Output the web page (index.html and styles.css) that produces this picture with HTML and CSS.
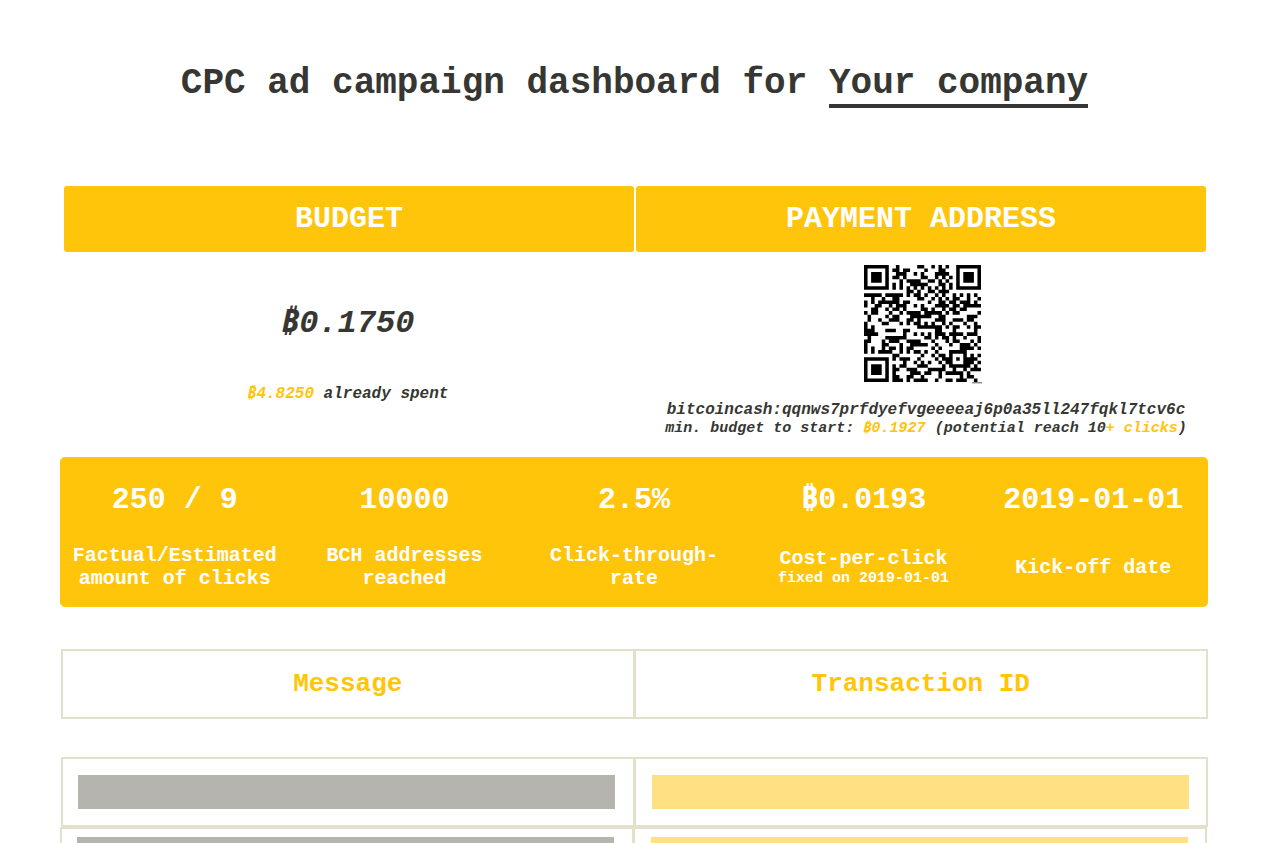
FILE: index.html
```
<!DOCTYPE html>
<html lang="en">
<head>
    <meta charset="UTF-8">
    <meta name="viewport" content="width=device-width, initial-scale=1.0">
    <title>CPC ad campaign dashboard</title>
    <link rel="stylesheet" href="styles.css">
</head>
<body>
    <h1>CPC ad campaign dashboard for <span class="company">Your company</span></h1>

    <table class="summary">
        <thead>
            <tr>
                <th>BUDGET</th>
                <th>PAYMENT ADDRESS</th>
            </tr>
        </thead>
        <tbody>
            <tr>
                <td class="budget">
                    <p class="amount"><span class="coin">₿</span>0.1750</p>
                    <p class="spent"><span class="accent"><span class="coin">₿</span>4.8250</span> already spent</p>
                </td>
                <td class="payment">
                    <svg id="qr" class="qr" viewBox="0 0 33 33" role="img" aria-label="Payment QR code"></svg>
                    <p class="address" id="address">bitcoincash:qqnws7prfdyefvgeeeeaj6p0a35ll247fqkl7tcv6c</p>
                    <p class="minimum">min. budget to start: <span class="accent"><span class="coin">₿</span>0.1927</span> (potential reach 10<span class="accent">+ clicks</span>)</p>
                </td>
            </tr>
        </tbody>
    </table>

    <div class="stats">
        <div class="stat">
            <div class="value">250 / 9</div>
            <div class="label">Factual/Estimated amount of clicks</div>
        </div>
        <div class="stat">
            <div class="value">10000</div>
            <div class="label">BCH addresses reached</div>
        </div>
        <div class="stat">
            <div class="value">2.5%</div>
            <div class="label">Click-through-rate</div>
        </div>
        <div class="stat">
            <div class="value"><span class="coin">₿</span>0.0193</div>
            <div class="label">Cost-per-click <small>fixed on 2019-01-01</small></div>
        </div>
        <div class="stat">
            <div class="value">2019-01-01</div>
            <div class="label">Kick-off date</div>
        </div>
    </div>

    <table class="list list-head">
        <tr>
            <th>Message</th>
            <th>Transaction ID</th>
        </tr>
    </table>

    <table class="list">
        <tr>
            <td><div class="bar message"></div></td>
            <td><div class="bar transaction"></div></td>
        </tr>
    </table>
    <table class="list list-more">
        <tr>
            <td><div class="bar message"></div></td>
            <td><div class="bar transaction"></div></td>
        </tr>
    </table>

    <script src="qr.js"></script>
</body>
</html>
```
FILE: styles.css
```
body {
    margin: 0;
    padding: 0 65px 0 61px;
    background-color: #fff;
    color: #363732;
    font-family: "Liberation Mono", monospace;
    font-weight: bold;
}

h1 {
    margin: 64px 0 80px;
    text-align: center;
    font-size: 36px;
    line-height: 40px;
}

.company {
    border-bottom: 4px solid #363732;
}

p {
    margin: 0;
}

.accent {
    color: #ffc50b;
}

.coin {
    font-family: "Noto Sans", sans-serif;
    line-height: 1;
}

/* budget and payment address */

.summary {
    width: calc(100% - 1px);
    margin-left: 1px;
    table-layout: fixed;
    border-spacing: 2px;
    text-align: center;
}

.summary th {
    height: 66px;
    padding: 0;
    border-radius: 3px;
    background-color: #ffc50b;
    color: #fff;
    font-size: 30px;
}

.summary td {
    padding: 10px 0 0;
    vertical-align: top;
    font-style: italic;
}

.summary .budget {
    padding-right: 2px;
}

.summary .payment {
    padding-left: 2px;
}

.amount {
    margin-top: 40px;
    font-size: 32px;
    line-height: 40px;
}

.spent {
    margin-top: 40px;
    font-size: 16px;
    line-height: 20px;
}

.qr {
    display: block;
    width: 117px;
    height: 117px;
    margin: 1px auto 20px;
    overflow: visible;
}

.address,
.minimum {
    padding-left: 8px;
    font-size: 16px;
    line-height: 17px;
}

.minimum {
    font-size: 15px;
}

/* campaign numbers */

.stats {
    display: grid;
    grid-template-columns: repeat(5, 1fr);
    min-height: 150px;
    margin: 18px 0 42px -1px;
    border-radius: 5px;
    background-color: #ffc50b;
    color: #fff;
    text-align: center;
}

.stat {
    display: flex;
    flex-direction: column;
    padding: 23px 10px 0;
}

.value {
    font-size: 30px;
    line-height: 40px;
}

.label {
    display: flex;
    flex-direction: column;
    justify-content: center;
    min-height: 60px;
    margin-top: 17px;
    font-size: 20px;
    line-height: 23px;
}

.label small {
    font-size: 15px;
    line-height: 17px;
}

/* messages */

.list {
    width: 100%;
    table-layout: fixed;
    border-spacing: 0;
}

.list th,
.list td {
    height: 66px;
    padding: 0;
    border: 2px solid #e5e0cc;
}

.list th + th,
.list td + td {
    border-left-width: 1px;
}

.list th {
    color: #ffc50b;
    font-size: 26px;
}

.list-head {
    margin-bottom: 38px;
}

.bar {
    height: 34px;
}

.message {
    margin: 0 18px 0 15px;
    background-color: #b5b4ae;
}

.transaction {
    margin: 0 17px 0 16px;
    background-color: #ffe082;
}

.list-more {
    margin-left: -1px;
}

.list-more td {
    height: 50px;
    padding: 8px 0;
    vertical-align: top;
}
```
FILE: qr.js
```
// QR code, version 4, level L, mask 2, byte mode
var SIZE = 33;
var DATA_WORDS = 80;
var EC_WORDS = 20;
var FORMAT = '111110110101010';

function multiply(a, b) {
    var result = 0;
    while (b) {
        if (b & 1) result ^= a;
        a <<= 1;
        if (a & 256) a ^= 0x11d;
        b >>= 1;
    }
    return result;
}

function codewords(text) {
    var bits = '0100' + text.length.toString(2).padStart(8, '0');
    for (var i = 0; i < text.length; i++) {
        bits += text.charCodeAt(i).toString(2).padStart(8, '0');
    }
    bits += '0000';

    var words = bits.match(/.{8}/g).map(function (b) { return parseInt(b, 2); });
    for (var pad = 0xec; words.length < DATA_WORDS; pad ^= 0xfd) {
        words.push(pad);
    }

    // generator polynomial, leading 1 left out
    var gen = new Array(EC_WORDS).fill(0);
    gen[EC_WORDS - 1] = 1;
    var root = 1;
    for (var n = 0; n < EC_WORDS; n++) {
        for (var j = 0; j < EC_WORDS; j++) {
            gen[j] = multiply(gen[j], root);
            if (j + 1 < EC_WORDS) gen[j] ^= gen[j + 1];
        }
        root = multiply(root, 2);
    }

    var ec = new Array(EC_WORDS).fill(0);
    words.forEach(function (word) {
        var factor = word ^ ec.shift();
        ec.push(0);
        gen.forEach(function (g, k) { ec[k] ^= multiply(g, factor); });
    });
    return words.concat(ec);
}

function buildMatrix(text) {
    var grid = [];
    for (var i = 0; i < SIZE; i++) {
        grid.push(new Array(SIZE).fill(null));
    }

    for (var t = 0; t < SIZE; t++) {
        grid[6][t] = grid[t][6] = t % 2 == 0;
    }

    [[3, 3], [3, SIZE - 4], [SIZE - 4, 3]].forEach(function (c) {
        for (var dy = -4; dy <= 4; dy++) {
            for (var dx = -4; dx <= 4; dx++) {
                var y = c[0] + dy, x = c[1] + dx;
                var d = Math.max(Math.abs(dx), Math.abs(dy));
                if (y >= 0 && y < SIZE && x >= 0 && x < SIZE) grid[y][x] = d != 2 && d != 4;
            }
        }
    });

    for (var ay = -2; ay <= 2; ay++) {
        for (var ax = -2; ax <= 2; ax++) {
            grid[26 + ay][26 + ax] = Math.max(Math.abs(ax), Math.abs(ay)) != 1;
        }
    }

    var first = [0, 1, 2, 3, 4, 5, 7, 8];
    for (var f = 0; f < 15; f++) {
        var on = FORMAT[f] == '1';
        if (f < 8) {
            grid[8][first[f]] = on;
        } else {
            grid[first[14 - f]][8] = on;
        }
        if (f < 7) {
            grid[SIZE - 1 - f][8] = on;
        } else {
            grid[8][SIZE - 15 + f] = on;
        }
    }
    grid[SIZE - 8][8] = true;

    var stream = codewords(text).map(function (w) { return w.toString(2).padStart(8, '0'); }).join('');
    var pos = 0;
    var up = true;
    for (var right = SIZE - 1; right > 0; right -= 2) {
        if (right == 6) right = 5;
        for (var v = 0; v < SIZE; v++) {
            var row = up ? SIZE - 1 - v : v;
            for (var col = right; col > right - 2; col--) {
                if (grid[row][col] === null) {
                    grid[row][col] = (stream[pos++] == '1') != (col % 3 == 0);
                }
            }
        }
        up = !up;
    }
    return grid;
}

var path = '';
buildMatrix(document.getElementById('address').textContent).forEach(function (row, y) {
    row.forEach(function (dark, x) {
        if (dark) path += 'M' + x + ' ' + y + 'h1v1h-1z';
    });
});
document.getElementById('qr').innerHTML = '<path d="' + path + '"/><path fill="#888" d="M30.5 33h2.8v.4h-2.8z"/>';
```
